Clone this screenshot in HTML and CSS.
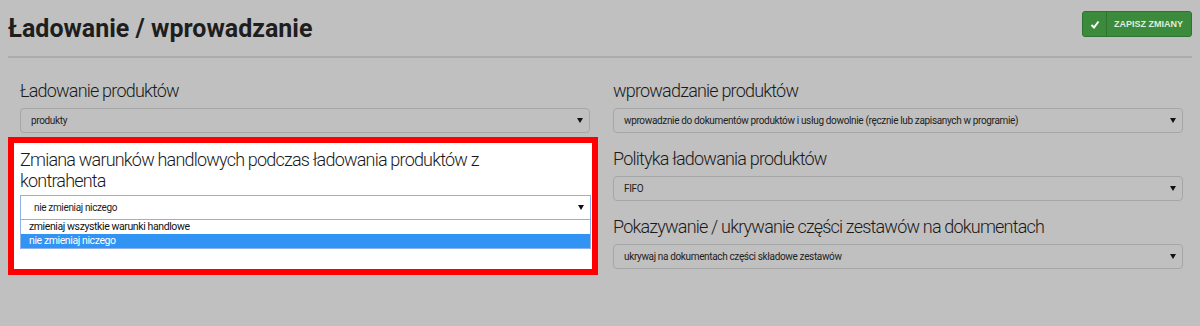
FILE: index.html
```html
<!doctype html>
<html>
<head>
<meta charset="utf-8">
<title>Ładowanie / wprowadzanie</title>
<link rel="stylesheet" href="styles.css">
</head>
<body>
<div class="page">
	<div class="header">
		<h1>Ładowanie / wprowadzanie</h1>
		<button class="btn-save">
			<span class="btn-icon"><svg width="10" height="9" viewBox="0 0 10 9"><polyline points="1.5,5 4,7.5 8.5,1.5" fill="none" stroke="#fff" stroke-width="2"/></svg></span>
			<span class="btn-text">ZAPISZ ZMIANY</span>
		</button>
	</div>
	<div class="columns">
		<div class="col col-left">
			<div class="group group-tight">
				<label>Ładowanie produktów</label>
				<div class="select"><span>produkty</span><i class="arrow"></i></div>
			</div>
			<div class="group group-marked">
				<label>Zmiana warunków handlowych podczas ładowania produktów z kontrahenta</label>
				<div class="select select-open"><span>nie zmieniaj niczego</span><i class="arrow"></i></div>
				<ul class="options">
					<li>zmieniaj wszystkie warunki handlowe</li>
					<li class="active">nie zmieniaj niczego</li>
				</ul>
			</div>
		</div>
		<div class="col col-right">
			<div class="group">
				<label>wprowadzanie produktów</label>
				<div class="select"><span>wprowadznie do dokumentów produktów i usług dowolnie (ręcznie lub zapisanych w programie)</span><i class="arrow"></i></div>
			</div>
			<div class="group">
				<label>Polityka ładowania produktów</label>
				<div class="select"><span>FIFO</span><i class="arrow"></i></div>
			</div>
			<div class="group">
				<label>Pokazywanie / ukrywanie części zestawów na dokumentach</label>
				<div class="select"><span>ukrywaj na dokumentach części składowe zestawów</span><i class="arrow"></i></div>
			</div>
		</div>
	</div>
</div>
</body>
</html>
```

FILE: styles.css
```css
body { margin: 0; background: #c0c0c0; font-family: Roboto, "Liberation Sans", sans-serif; color: #222; }
.page { padding: 0 8px; }

.header { height: 56px; display: flex; justify-content: space-between; align-items: flex-start; border-bottom: 2px solid #acacac; }
.header h1 { margin: 14px 0 0; font-size: 25px; line-height: 30px; font-weight: bold; color: #1e1e1e; }

.btn-save { margin: 11px 0 0; height: 26px; padding: 0; display: flex; align-items: stretch; background: #3c8a3c; border: 1px solid #2f7330; border-radius: 3px; cursor: pointer; }
.btn-icon { width: 23px; display: flex; align-items: center; justify-content: center; border-right: 1px solid #2f7330; }
.btn-text { display: flex; align-items: center; padding: 0 8px 0 7px; font-size: 9px; font-weight: bold; color: #dfeedd; }

.columns { display: grid; grid-template-columns: 592px 1fr; padding-top: 20px; }
.col-left { padding: 0 10px 0 12px; }
.col-right { padding: 0 9px 0 13px; }

.group { margin-bottom: 13px; }
.group-tight { margin-bottom: 4px; }
.group label { display: block; font-size: 18px; line-height: 26px; font-weight: 300; letter-spacing: -0.8px; color: #1a1a1a; margin-bottom: 4px; }

.select { height: 25px; box-sizing: border-box; display: flex; align-items: center; justify-content: space-between; padding: 0 6px 0 10px; border: 1px solid #a6a6a6; border-radius: 4px; font-size: 10px; letter-spacing: -0.35px; color: #222; }
.arrow { width: 0; height: 0; border-left: 3px solid transparent; border-right: 3px solid transparent; border-top: 5px solid #111; }

.group-marked { margin: 0 -8px 0 -12px; padding: 6px 1px 20px 6px; border: 6px solid #ff0000; background: #fff; }
.group-marked label { max-width: 480px; line-height: 21px; }
.select-open { padding-left: 13px; border: 1px solid #8fb0e8; border-radius: 0; background: #fff; }
.options { margin: 0; padding: 0; list-style: none; border: 1px solid #8fb0e8; border-top: none; font-size: 10.5px; letter-spacing: -0.4px; }
.options li { height: 14px; line-height: 14px; padding-left: 8px; color: #111; }
.options li.active { background: #3193f4; color: #fff; }
```
